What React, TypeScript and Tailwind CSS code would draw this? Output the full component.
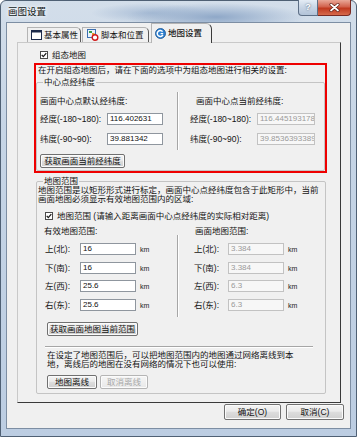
import React from "react";

const F = "font-['Liberation_Sans','Noto_Sans_CJK_SC',sans-serif]";

function Check() {
  return (
    <div className="w-[8px] h-[8px] border border-[#4a4a4a] bg-white flex items-center justify-center shrink-0">
      <svg width="6" height="6" viewBox="0 0 6 6">
        <path d="M0.7 2.9 L2.3 4.6 L5.3 1.1" stroke="#1a1a1a" strokeWidth="1.3" fill="none" />
      </svg>
    </div>
  );
}

function Field({ value, disabled, className = "" }: { value: string; disabled?: boolean; className?: string }) {
  const base = "h-[12px] border text-[8px] leading-[10px] pl-[2px] overflow-hidden whitespace-nowrap shrink-0";
  const look = disabled
    ? "bg-[#f7f7f7] border-[#c2c2c2] text-[#9a9a9a]"
    : "bg-white border-[#8f969e] text-[#111]";
  return <div className={`${base} ${look} ${className}`}>{value}</div>;
}

function Btn({ children, disabled, className = "" }: { children: React.ReactNode; disabled?: boolean; className?: string }) {
  const look = disabled
    ? "border-[#b5b5b5] text-[#a8a8a8] bg-[linear-gradient(#f6f6f6,#efefef_50%,#e8e8e8)]"
    : "border-[#707070] text-[#111] bg-[linear-gradient(#f3f3f3,#ebebeb_45%,#dddddd_50%,#d0d0d0)]";
  return (
    <div
      className={`border rounded-[2px] shadow-[inset_0_0_0_1px_#fbfbfb] flex items-center justify-center text-[8.5px] leading-none whitespace-nowrap shrink-0 ${look} ${className}`}
    >
      {children}
    </div>
  );
}

function Km() {
  return <div className="ml-[4px] text-[7px] leading-none text-[#222]">km</div>;
}

function WinIcon() {
  return (
    <svg width="11" height="10" viewBox="0 0 11 10">
      <rect x="0.5" y="0.5" width="10" height="9" fill="#fff" stroke="#1c2a4a" />
      <rect x="0.5" y="0.5" width="10" height="2" fill="#1c2a4a" />
    </svg>
  );
}

function ScriptIcon() {
  return (
    <svg width="12" height="12" viewBox="0 0 12 12">
      <rect x="0.5" y="0.5" width="8" height="8" fill="#e9f2fb" stroke="#3b6fb0" />
      <rect x="2" y="2" width="3" height="2" fill="#3aa04a" />
      <rect x="5" y="4" width="2.5" height="2" fill="#e0a020" />
      <circle cx="8" cy="8.5" r="2.8" fill="#fff" stroke="#d01818" strokeWidth="1.4" />
    </svg>
  );
}

function MapIcon() {
  return (
    <svg width="11" height="11" viewBox="0 0 11 11">
      <circle cx="5.5" cy="5.5" r="5" fill="#2d7fd0" stroke="#15508f" strokeWidth="0.8" />
      <path d="M7.6 3.6 A3 3 0 1 0 7.9 6.9" stroke="#fff" strokeWidth="1.5" fill="none" />
      <path d="M5.6 5.6 H8.2" stroke="#fff" strokeWidth="1.3" />
    </svg>
  );
}

export default function App() {
  return (
    <div className={`${F} w-[357px] h-[437px] overflow-hidden`}>
      <div className="w-[357px] h-[437px] border border-[#4f6074] rounded-t-[6px] flex flex-col bg-[radial-gradient(ellipse_90px_14px_at_215px_16px,#8fa8c8,transparent),radial-gradient(ellipse_60px_10px_at_150px_12px,#a9bdd6,transparent),linear-gradient(180deg,#d3deea,#c6d5e6_30%,#bccde2)]">
        {/* Title bar */}
        <div className="h-[21px] flex items-start justify-between shrink-0">
          <div className="ml-[7px] mt-[5px] text-[9.5px] leading-[11px] text-[#101820] [text-shadow:0_0_6px_#ffffff,0_0_3px_#ffffff]">
            画图设置
          </div>
          <div className="flex mr-[5px] -mt-px">
            <div className="w-[20px] h-[16px] border border-[#5d6f86] border-t-0 rounded-bl-[4px] bg-[linear-gradient(#e4ecf5,#c7d4e4_50%,#b2c3d8)] flex items-center justify-center text-[9px] leading-none text-white font-bold [text-shadow:0_0_2px_#3a4d66]">
              ?
            </div>
            <div className="w-[33px] h-[16px] border border-[#7a2a22] border-l-0 border-t-0 rounded-br-[4px] bg-[linear-gradient(#e9a898,#d2624d_45%,#c0391f_55%,#d66a4c)] flex items-center justify-center">
              <svg width="11" height="9" viewBox="0 0 11 9">
                <path d="M2 1.5 L9 7.5 M9 1.5 L2 7.5" stroke="#5a1a12" strokeWidth="3" strokeLinecap="round" />
                <path d="M2 1.5 L9 7.5 M9 1.5 L2 7.5" stroke="#fff" strokeWidth="1.7" strokeLinecap="round" />
              </svg>
            </div>
          </div>
        </div>

        {/* Client area */}
        <div className="ml-[5px] w-[345px] h-[407px] border border-[#7d8ea3] bg-[#f0f0f0] flex flex-col text-[8.5px] text-[#141414] shrink-0">
          {/* Tabs */}
          <div className="h-[19px] flex items-end pl-[20px] shrink-0">
            <div className="w-[54px] h-[15px] border border-b-0 border-[#b4b4b4] border-r-[#5a5a5a] rounded-tr-[5px] bg-[#f0f0f0] flex items-center pl-[3px] gap-[2px]">
              <WinIcon />
              <span className="leading-none">基本属性</span>
            </div>
            <div className="ml-[1px] w-[67px] h-[15px] border border-b-0 border-[#b4b4b4] border-r-[#5a5a5a] rounded-tr-[5px] bg-[#f0f0f0] flex items-center pl-[4px] gap-[2px]">
              <ScriptIcon />
              <span className="leading-none">脚本和位置</span>
            </div>
            <div className="ml-[2px] w-[61px] h-[20px] -mb-px relative z-10 border border-b-0 border-[#b4b4b4] border-r-[#3a3a3a] rounded-tr-[6px] bg-[#f0f0f0] flex items-center pl-[3px] gap-[2px]">
              <MapIcon />
              <span className="leading-none font-medium">地图设置</span>
            </div>
          </div>

          {/* Panel */}
          <div className="ml-[10px] w-[324px] h-[361px] border border-t-[#c9c9c9] border-l-[#c9c9c9] border-r-[#3a3a3a] border-b-[#3a3a3a] bg-[#f0f0f0] flex flex-col shrink-0">
            <div className="mt-[7px] ml-[22px] h-[10px] flex items-center gap-[4px]">
              <Check />
              <span className="leading-none">组态地图</span>
            </div>

            {/* Red box */}
            <div className="mt-[3px] ml-[16px] w-[293px] h-[110px] border-2 border-[#ee0000] flex flex-col shrink-0">
              <div className="h-[10px] leading-[10px] pl-[2px] whitespace-nowrap">
                在开启组态地图后，请在下面的选项中为组态地图进行相关的设置:
              </div>
              <div className="mt-[7px] h-[89px] relative border border-[#c4c4c4] rounded-[2px] flex flex-row shrink-0">
                <div className="absolute left-[6px] -top-[6px] px-[1px] bg-[#f0f0f0] leading-[10px]">中心点经纬度</div>
                <div className="flex flex-row pt-[9px]">
                  <div className="w-[140px] pl-[3px] pt-[4px] flex flex-col">
                    <div className="h-[10px] leading-[10px] whitespace-nowrap">画面中心点默认经纬度:</div>
                    <div className="mt-[7px] flex items-center">
                      <div className="w-[67px] whitespace-nowrap leading-none">经度(-180~180):</div>
                      <Field value="116.402631" className="w-[56px]" />
                    </div>
                    <div className="mt-[8px] flex items-center">
                      <div className="w-[67px] whitespace-nowrap leading-none">纬度(-90~90):</div>
                      <Field value="39.881342" className="w-[56px]" />
                    </div>
                    <Btn className="mt-[9px] w-[85px] h-[14px]">获取画面当前经纬度</Btn>
                  </div>
                  <div className="w-[2px] h-[58px] border-l border-l-[#a6a6a6] border-r border-r-white shrink-0" />
                  <div className="pl-[11px] pt-[4px] flex flex-col">
                    <div className="ml-[6px] h-[10px] leading-[10px] whitespace-nowrap">画面中心点当前经纬度:</div>
                    <div className="mt-[7px] flex items-center">
                      <div className="w-[67px] whitespace-nowrap leading-none">经度(-180~180):</div>
                      <Field value="116.445193178" disabled className="w-[58px]" />
                    </div>
                    <div className="mt-[8px] flex items-center">
                      <div className="w-[67px] whitespace-nowrap leading-none">纬度(-90~90):</div>
                      <Field value="39.8536393389" disabled className="w-[58px]" />
                    </div>
                  </div>
                </div>
              </div>
            </div>

            {/* Map range group */}
            <div className="mt-[8px] ml-[18px] w-[290px] h-[213px] relative border border-[#c4c4c4] rounded-[2px] flex flex-col shrink-0">
              <div className="absolute left-[6px] -top-[6px] px-[1px] bg-[#f0f0f0] leading-[10px]">地图范围</div>
              <div className="pl-[1px] pt-[4px] leading-[9px] whitespace-nowrap">
                地图范围是以矩形形式进行标定，画面中心点经纬度包含于此矩形中，当前
                <br />
                画面地图必须显示有效地图范围内的区域:
              </div>
              <div className="mt-[7px] pl-[8px] h-[10px] flex items-center gap-[4px]">
                <Check />
                <span className="leading-none whitespace-nowrap">地图范围 (请输入距离画面中心点经纬度的实际相对距离)</span>
              </div>
              <div className="mt-[5px] flex flex-row">
                <div className="w-[140px] pl-[8px] flex flex-col">
                  <div className="-ml-[1px] h-[10px] leading-[10px]">有效地图范围:</div>
                  <div className="mt-[7px] flex items-center">
                    <div className="w-[35px] whitespace-nowrap leading-none">上(北):</div>
                    <Field value="16" className="w-[56px]" />
                    <Km />
                  </div>
                  <div className="mt-[7px] flex items-center">
                    <div className="w-[35px] whitespace-nowrap leading-none">下(南):</div>
                    <Field value="16" className="w-[56px]" />
                    <Km />
                  </div>
                  <div className="mt-[6px] flex items-center">
                    <div className="w-[35px] whitespace-nowrap leading-none">左(西):</div>
                    <Field value="25.6" className="w-[56px]" />
                    <Km />
                  </div>
                  <div className="mt-[7px] flex items-center">
                    <div className="w-[35px] whitespace-nowrap leading-none">右(东):</div>
                    <Field value="25.6" className="w-[56px]" />
                    <Km />
                  </div>
                  <Btn className="mt-[11px] ml-[2px] w-[91px] h-[14px]">获取画面地图当前范围</Btn>
                </div>
                <div className="mt-[9px] w-[2px] h-[82px] border-l border-l-[#a6a6a6] border-r border-r-white shrink-0" />
                <div className="pl-[15px] flex flex-col">
                  <div className="ml-[1px] h-[10px] leading-[10px]">画面地图范围:</div>
                  <div className="mt-[7px] flex items-center">
                    <div className="w-[34px] whitespace-nowrap leading-none">上(北):</div>
                    <Field value="3.384" disabled className="w-[56px]" />
                    <Km />
                  </div>
                  <div className="mt-[7px] flex items-center">
                    <div className="w-[34px] whitespace-nowrap leading-none">下(南):</div>
                    <Field value="3.384" disabled className="w-[56px]" />
                    <Km />
                  </div>
                  <div className="mt-[6px] flex items-center">
                    <div className="w-[34px] whitespace-nowrap leading-none">左(西):</div>
                    <Field value="6.3" disabled className="w-[56px]" />
                    <Km />
                  </div>
                  <div className="mt-[7px] flex items-center">
                    <div className="w-[34px] whitespace-nowrap leading-none">右(东):</div>
                    <Field value="6.3" disabled className="w-[56px]" />
                    <Km />
                  </div>
                </div>
              </div>
              <div className="mt-[10px] ml-[8px] w-[268px] h-[2px] border-t border-t-[#a6a6a6] border-b border-b-white" />
              <div className="mt-[3px] pl-[10px] leading-[9px] whitespace-nowrap">
                在设定了地图范围后，可以把地图范围内的地图通过网络离线到本
                <br />
                地，离线后的地图在没有网络的情况下也可以使用:
              </div>
              <div className="mt-[6px] pl-[10px] flex gap-[3px]">
                <Btn className="w-[50px] h-[14px]">地图离线</Btn>
                <Btn disabled className="w-[48px] h-[14px]">取消离线</Btn>
              </div>
            </div>
          </div>

          {/* OK / Cancel */}
          <div className="mt-[1px] flex justify-end pr-[6px] gap-[5px]">
            <Btn className="w-[57px] h-[16px]">确定(O)</Btn>
            <Btn className="w-[58px] h-[16px]">取消(C)</Btn>
          </div>
        </div>
      </div>
    </div>
  );
}
